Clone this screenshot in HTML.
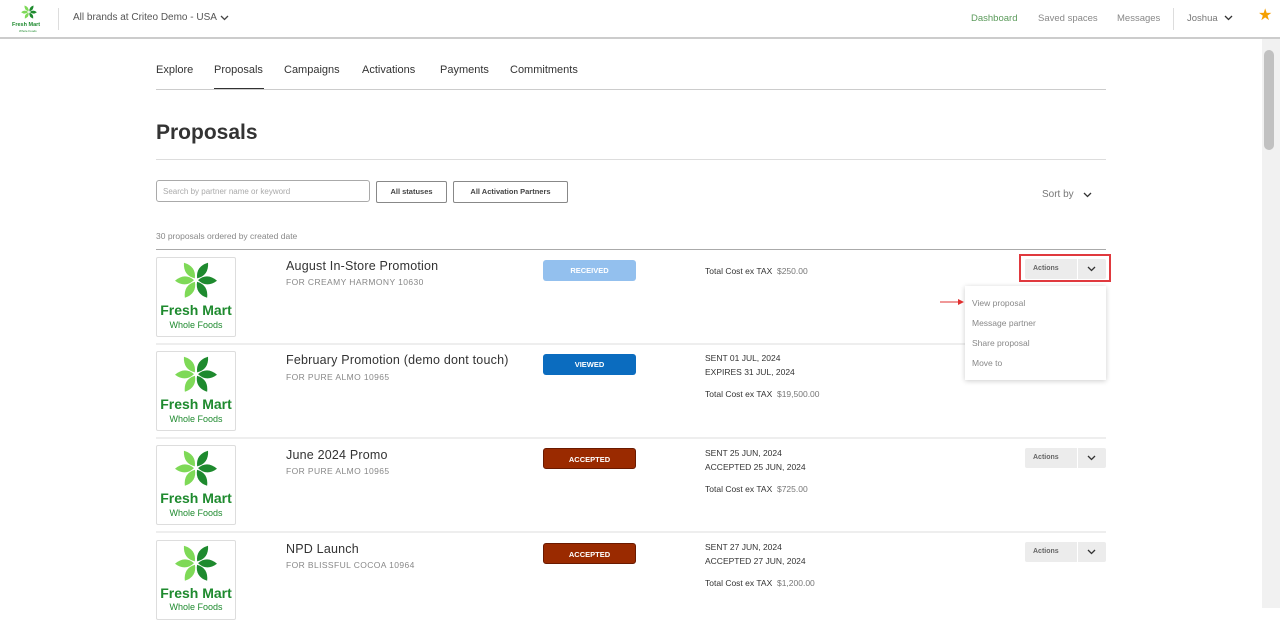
<!DOCTYPE html>
<html><head><style>
*{box-sizing:border-box;margin:0;padding:0}
body{width:1280px;height:608px;overflow:hidden;background:#fff;font-family:"Liberation Sans",sans-serif;color:#333;position:relative}
.abs{position:absolute}
.hdr{left:0;top:0;width:1280px;height:39px;border-bottom:2px solid #ccc;background:#fff}
.sb{left:1262px;top:39px;width:18px;height:569px;background:#f1f1f1}
.thumb{left:1264px;top:50px;width:10px;height:100px;background:#c1c1c1;border-radius:5px}
.t{position:absolute;white-space:nowrap}
.logo{position:absolute;left:156px;width:80px;height:80px;border:1px solid #ddd;border-radius:2px;background:#fff}
.title{font-size:12.5px;color:#333;letter-spacing:.2px}
.sub{font-size:8.5px;color:#888;letter-spacing:.4px}
.badge{position:absolute;left:543px;width:93px;height:21px;border-radius:3px;color:#fff;font-size:7.5px;font-weight:bold;text-align:center;line-height:21px}
.d{font-size:8.5px;color:#333}
.act{position:absolute;left:1025px;width:81px;height:20px;background:#ececec;border-radius:2px}
.act span{position:absolute;left:8px;top:6px;font-size:7px;font-weight:bold;color:#666}
.act i{position:absolute;left:52px;top:0;width:1px;height:20px;background:#fff}
.act svg{position:absolute;left:62px;top:7px}
.hr{position:absolute;left:156px;width:950px;height:2px;background:#eee}
.fm{position:absolute;left:156px;width:80px;text-align:center;font-weight:bold;font-size:14px;color:#1e8a2e}
.wf{position:absolute;left:156px;width:80px;text-align:center;font-size:9px;color:#1e8a2e}
</style></head><body>
<svg width="0" height="0" style="position:absolute"><defs>
<path id="pt" d="M2 0 Q11 -8 21 0 Q11 8 2 0Z"/>
<g id="lf">
<use href="#pt" fill="#7ed957" transform="rotate(-125)"/>
<use href="#pt" fill="#7ed957" transform="rotate(178)"/>
<use href="#pt" fill="#7ed957" transform="rotate(122)"/>
<use href="#pt" fill="#1e8a2e" transform="rotate(-55)"/>
<use href="#pt" fill="#1e8a2e" transform="rotate(2)"/>
<use href="#pt" fill="#1e8a2e" transform="rotate(58)"/>
</g></defs></svg>
<div class="abs hdr"></div>
<svg class="abs" style="left:14px;top:2px" width="30" height="20" viewBox="0 0 80 50"><use href="#lf" x="40" y="25"/></svg>
<div class="t" style="left:12px;top:22px;font-size:5.5px;font-weight:bold;color:#1e8a2e">Fresh Mart</div>
<div class="t" style="left:19px;top:29px;font-size:3px;color:#1e8a2e">Whole Foods</div>
<div class="abs" style="left:58px;top:8px;width:1px;height:22px;background:#ddd"></div>
<div class="t" style="left:73px;top:12px;font-size:10px;color:#555">All brands at Criteo Demo - USA</div>
<svg class="abs" style="left:220px;top:15px" width="9" height="6"><polyline points="1,1 4.5,4.5 8,1" fill="none" stroke="#444" stroke-width="1.3"/></svg>
<div class="t" style="left:971px;top:13px;font-size:9.5px;color:#5a9a5a">Dashboard</div>
<div class="t" style="left:1038px;top:13px;font-size:9.5px;color:#888">Saved spaces</div>
<div class="t" style="left:1117px;top:13px;font-size:9.5px;color:#888">Messages</div>
<div class="abs" style="left:1173px;top:8px;width:1px;height:22px;background:#ddd"></div>
<div class="t" style="left:1187px;top:13px;font-size:9.5px;color:#777">Joshua</div>
<svg class="abs" style="left:1224px;top:15px" width="9" height="6"><polyline points="1,1 4.5,4.5 8,1" fill="none" stroke="#333" stroke-width="1.3"/></svg>
<div class="t" style="left:1258px;top:5px;font-size:16px;color:#f5a000">&#9733;</div>
<div class="abs sb"></div><div class="abs thumb"></div>

<div class="t" style="left:156px;top:64px;font-size:11px;color:#333">Explore</div>
<div class="t" style="left:214px;top:64px;font-size:11px;color:#333">Proposals</div>
<div class="abs" style="left:214px;top:88px;width:50px;height:2px;background:#333"></div>
<div class="t" style="left:284px;top:64px;font-size:11px;color:#333">Campaigns</div>
<div class="t" style="left:362px;top:64px;font-size:11px;color:#333">Activations</div>
<div class="t" style="left:440px;top:64px;font-size:11px;color:#333">Payments</div>
<div class="t" style="left:510px;top:64px;font-size:11px;color:#333">Commitments</div>
<div class="abs" style="left:156px;top:89px;width:950px;height:1px;background:#ccc"></div>
<div class="t" style="left:156px;top:121px;font-size:21px;font-weight:bold;color:#333">Proposals</div>
<div class="abs" style="left:156px;top:159px;width:950px;height:1px;background:#ddd"></div>

<div class="abs" style="left:156px;top:180px;width:214px;height:22px;border:1px solid #aaa;border-radius:3px"></div>
<div class="t" style="left:163px;top:187px;font-size:8px;color:#aaa">Search by partner name or keyword</div>
<div class="abs" style="left:376px;top:181px;width:71px;height:22px;border:1px solid #888;border-radius:2px;font-size:7.5px;font-weight:bold;text-align:center;line-height:20px;color:#444">All statuses</div>
<div class="abs" style="left:453px;top:181px;width:115px;height:22px;border:1px solid #888;border-radius:2px;font-size:7.5px;font-weight:bold;text-align:center;line-height:20px;color:#444">All Activation Partners</div>
<div class="t" style="left:1042px;top:189px;font-size:10px;color:#777">Sort by</div>
<svg class="abs" style="left:1083px;top:192px" width="9" height="6"><polyline points="1,1 4.5,4.5 8,1" fill="none" stroke="#333" stroke-width="1.3"/></svg>
<div class="t" style="left:156px;top:231px;font-size:8.5px;color:#888">30 proposals ordered by created date</div>
<div class="abs" style="left:156px;top:249px;width:950px;height:1px;background:#aaa"></div>

<div class="logo" style="top:257px"></div>
<div class="logo" style="top:351px"></div>
<div class="logo" style="top:445px"></div>
<div class="logo" style="top:540px"></div>
<svg class="abs" style="left:156px;top:0" width="80" height="608">
<use href="#lf" x="40" y="280"/><use href="#lf" x="40" y="374"/><use href="#lf" x="40" y="468"/><use href="#lf" x="40" y="563"/>
</svg>
<div class="fm" style="top:302px">Fresh Mart</div><div class="wf" style="top:320px">Whole Foods</div>
<div class="fm" style="top:396px">Fresh Mart</div><div class="wf" style="top:414px">Whole Foods</div>
<div class="fm" style="top:490px">Fresh Mart</div><div class="wf" style="top:508px">Whole Foods</div>
<div class="fm" style="top:585px">Fresh Mart</div><div class="wf" style="top:602px">Whole Foods</div>

<div class="t title" style="left:286px;top:259px">August In-Store Promotion</div>
<div class="t sub" style="left:286px;top:277px">FOR CREAMY HARMONY 10630</div>
<div class="badge" style="top:260px;background:#93c0ee">RECEIVED</div>
<div class="t d" style="left:705px;top:266px">Total Cost ex TAX &nbsp;<span style="color:#777">$250.00</span></div>
<div class="hr" style="top:343px;width:810px"></div>

<div class="t title" style="left:286px;top:353px">February Promotion (demo dont touch)</div>
<div class="t sub" style="left:286px;top:372px">FOR PURE ALMO 10965</div>
<div class="badge" style="top:354px;background:#0b6cbf">VIEWED</div>
<div class="t d" style="left:705px;top:353px">SENT 01 JUL, 2024</div>
<div class="t d" style="left:705px;top:367px">EXPIRES 31 JUL, 2024</div>
<div class="t d" style="left:705px;top:389px">Total Cost ex TAX &nbsp;<span style="color:#777">$19,500.00</span></div>
<div class="hr" style="top:437px"></div>

<div class="t title" style="left:286px;top:448px">June 2024 Promo</div>
<div class="t sub" style="left:286px;top:466px">FOR PURE ALMO 10965</div>
<div class="badge" style="top:448px;background:#9a2a00;border:1px solid #6a1a00">ACCEPTED</div>
<div class="t d" style="left:705px;top:448px">SENT 25 JUN, 2024</div>
<div class="t d" style="left:705px;top:462px">ACCEPTED 25 JUN, 2024</div>
<div class="t d" style="left:705px;top:484px">Total Cost ex TAX &nbsp;<span style="color:#777">$725.00</span></div>
<div class="act" style="top:448px"><span>Actions</span><i></i><svg width="9" height="6"><polyline points="1,1 4.5,4.5 8,1" fill="none" stroke="#333" stroke-width="1.3"/></svg></div>
<div class="hr" style="top:531px"></div>

<div class="t title" style="left:286px;top:542px">NPD Launch</div>
<div class="t sub" style="left:286px;top:560px">FOR BLISSFUL COCOA 10964</div>
<div class="badge" style="top:543px;background:#9a2a00;border:1px solid #6a1a00">ACCEPTED</div>
<div class="t d" style="left:705px;top:542px">SENT 27 JUN, 2024</div>
<div class="t d" style="left:705px;top:556px">ACCEPTED 27 JUN, 2024</div>
<div class="t d" style="left:705px;top:578px">Total Cost ex TAX &nbsp;<span style="color:#777">$1,200.00</span></div>
<div class="act" style="top:542px"><span>Actions</span><i></i><svg width="9" height="6"><polyline points="1,1 4.5,4.5 8,1" fill="none" stroke="#333" stroke-width="1.3"/></svg></div>

<div class="abs" style="left:1019px;top:254px;width:92px;height:28px;border:2px solid #e0393e"></div>
<div class="act" style="top:259px"><span>Actions</span><i></i><svg width="9" height="6"><polyline points="1,1 4.5,4.5 8,1" fill="none" stroke="#333" stroke-width="1.3"/></svg></div>
<div class="abs" style="left:965px;top:286px;width:141px;height:94px;background:#fff;box-shadow:0 1px 5px rgba(0,0,0,.2)"></div>
<div class="t" style="left:972px;top:298px;font-size:8.5px;color:#888">View proposal</div>
<div class="t" style="left:972px;top:318px;font-size:8.5px;color:#888">Message partner</div>
<div class="t" style="left:972px;top:338px;font-size:8.5px;color:#888">Share proposal</div>
<div class="t" style="left:972px;top:358px;font-size:8.5px;color:#888">Move to</div>
<svg class="abs" style="left:940px;top:298px" width="25" height="8"><line x1="0" y1="4" x2="19" y2="4" stroke="#e03030" stroke-width="1"/><path d="M18 1 L24 4 L18 7Z" fill="#e03030"/></svg>
</body></html>
